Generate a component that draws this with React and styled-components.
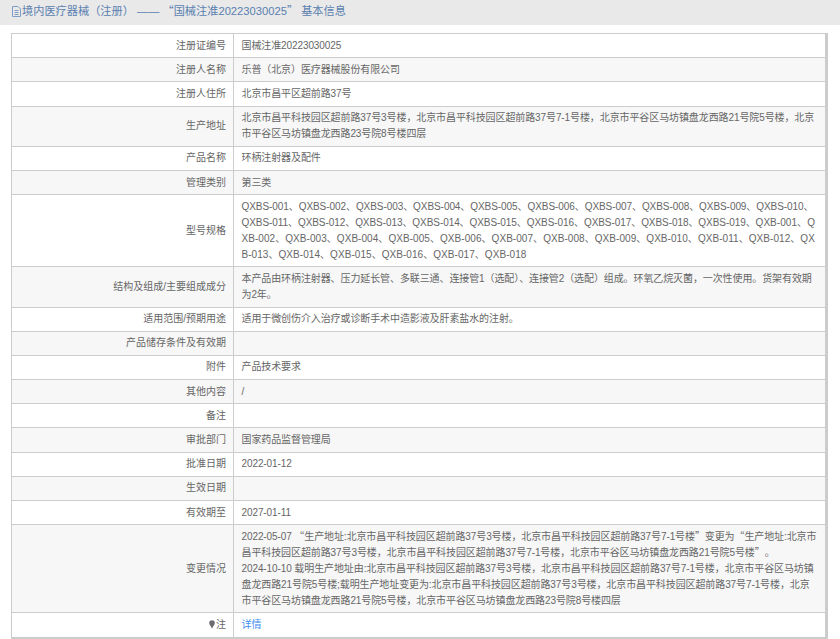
import React from 'react'
import styled, { createGlobalStyle } from 'styled-components'

const GlobalStyle = createGlobalStyle`
	html, body {
		margin: 0;
		padding: 0;
		background: #fff;
		font-family: "Liberation Sans", "Noto Sans CJK SC", sans-serif;
		font-size: 10px;
		color: #666;
	}
`

const Title = styled.h1`
	margin: 0;
	height: 25px;
	box-sizing: border-box;
	padding: 0 0 3px 12px;
	display: flex;
	align-items: center;
	gap: 1px;
	background: #e9e9e9;
	color: #5a7fb0;
	font-size: 11.200px;
	line-height: 16px;
	font-weight: normal;
	white-space: pre;
`

const Content = styled.section`
	padding: 8px 10px 0 11px;
`

const Table = styled.table`
	width: 817px;
	table-layout: fixed;
	border-collapse: collapse;
	border-right: 3px solid #ccc;
	border-bottom: 2px solid #ccc;
`

const Row = styled.tr`
	background: ${(props) => (props.$shaded ? '#f7f7f7' : '#fff')};
`

const Label = styled.th`
	width: 207px;
	padding: 3.600px 7px;
	border: 1px solid #ccc;
	text-align: right;
	font-weight: normal;
	line-height: 16px;
`

const Value = styled.td`
	padding: 3.600px 7px 3.600px 7.500px;
	border: 1px solid #ccc;
	line-height: 16px;
	letter-spacing: -0.100px;
	word-break: break-all;
`

const ModelGroup = styled.span`
	letter-spacing: ${(props) => props.$spacing};
`

const Link = styled.a`
	color: #3f8ff0;
	text-decoration: none;
`

const Quote = styled.span`
	font-family: "Noto Sans CJK SC", sans-serif;
	line-height: 0;
	text-spacing-trim: space-all;
`

const Pin = styled.svg`
	margin-right: 1px;
	vertical-align: -1px;
`

const DocIcon = () => (
	<svg width="9" height="11" viewBox="0 0 9 11" fill="none" stroke="#7f9cc4" strokeWidth="1">
		<path d="M.5.5h5.500l2.500 2.500v7.500h-8z" />
		<path d="M2.500 4.500h4M2.500 6.500h4M2.500 8.500h4" />
	</svg>
)

const PinIcon = () => (
	<Pin width="6" height="9" viewBox="0 0 6 9">
		<path d="M3 .3a2.800 2.800 0 0 1 2.800 2.800c0 1.600-1.600 3-2.800 5.600C1.800 6.100.2 4.700.2 3.100A2.800 2.800 0 0 1 3 .3z" fill="#6b6b70" />
	</Pin>
)

const modelCodes = (prefix, count) =>
	Array.from({ length: count }, (_, i) => `${prefix}-${String(i + 1).padStart(3, '0')}`).join('、')

const rows = [
	['注册证编号', '国械注准20223030025'],
	['注册人名称', '乐普（北京）医疗器械股份有限公司'],
	['注册人住所', '北京市昌平区超前路37号'],
	['生产地址', '北京市昌平科技园区超前路37号3号楼，北京市昌平科技园区超前路37号7-1号楼，北京市平谷区马坊镇盘龙西路21号院5号楼，北京市平谷区马坊镇盘龙西路23号院8号楼四层'],
	['产品名称', '环柄注射器及配件'],
	['管理类别', '第三类'],
	['型号规格', (
		<>
			<ModelGroup $spacing="-0.067px">{modelCodes('QXBS', 19)}、</ModelGroup>
			<ModelGroup $spacing="0.056px">{modelCodes('QXB', 18)}</ModelGroup>
		</>
	)],
	['结构及组成/主要组成成分', '本产品由环柄注射器、压力延长管、多联三通、连接管1（选配）、连接管2（选配）组成。环氧乙烷灭菌，一次性使用。货架有效期为2年。'],
	['适用范围/预期用途', '适用于微创伤介入治疗或诊断手术中造影液及肝素盐水的注射。'],
	['产品储存条件及有效期', ''],
	['附件', '产品技术要求'],
	['其他内容', '/'],
	['备注', ''],
	['审批部门', '国家药品监督管理局'],
	['批准日期', '2022-01-12'],
	['生效日期', ''],
	['有效期至', '2027-01-11'],
	['变更情况', (
		<>
			2022-05-07 <Quote>“</Quote>生产地址:北京市昌平科技园区超前路37号3号楼，北京市昌平科技园区超前路37号7-1号楼<Quote>”</Quote>变更为<Quote>“</Quote>生产地址:北京市昌平科技园区超前路37号3号楼，北京市昌平科技园区超前路37号7-1号楼，北京市平谷区马坊镇盘龙西路21号院5号楼<Quote>”</Quote>。
			<br />
			2024-10-10 载明生产地址由:北京市昌平科技园区超前路37号3号楼，北京市昌平科技园区超前路37号7-1号楼，北京市平谷区马坊镇盘龙西路21号院5号楼;载明生产地址变更为:北京市昌平科技园区超前路37号3号楼，北京市昌平科技园区超前路37号7-1号楼，北京市平谷区马坊镇盘龙西路21号院5号楼，北京市平谷区马坊镇盘龙西路23号院8号楼四层
		</>
	)],
	[<><PinIcon />注</>, <Link href="#">详情</Link>],
]

const App = () => (
	<>
		<GlobalStyle />
		<Title>
			<DocIcon />
			<span>境内医疗器械（注册） —— <Quote>“</Quote>国械注准20223030025<Quote>”</Quote> 基本信息</span>
		</Title>
		<Content>
			<Table>
				<tbody>
					{rows.map(([label, value], i) => (
						<Row key={i} $shaded={i % 2 === 1}>
							<Label>{label}</Label>
							<Value>{value}</Value>
						</Row>
					))}
				</tbody>
			</Table>
		</Content>
	</>
)

export default App
